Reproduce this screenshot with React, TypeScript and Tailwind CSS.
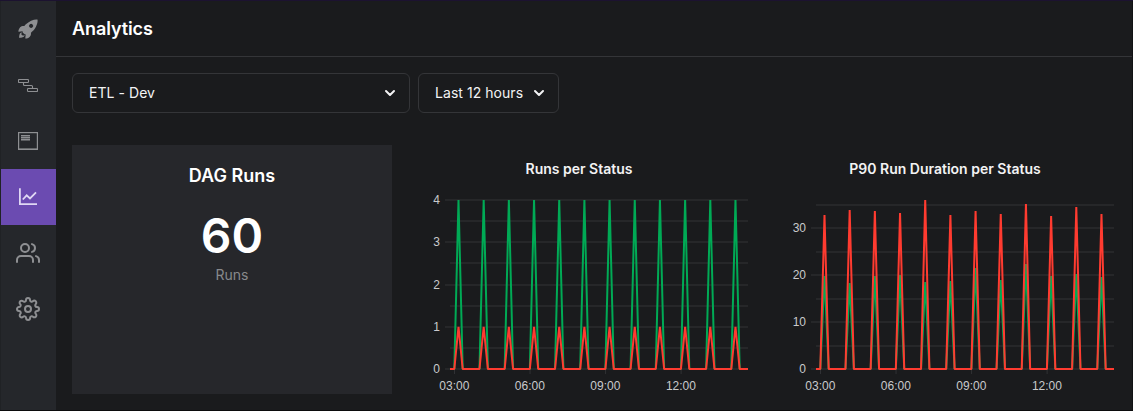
import { FiChevronDown, FiSettings, FiUsers } from 'react-icons/fi';
import { IoRocketSharp } from 'react-icons/io5';
import type { ReactNode } from 'react';

const PLOT_TOP = 200;
const BASE = 369;
const HOUR = 25.18;

function NavItem({ active, children }: { active?: boolean; children: ReactNode }) {
  return (
    <a className={`flex h-14 w-full items-center justify-center pr-px ${active ? 'bg-[#6b4bb1] text-[#e0d8f4]' : 'text-[#8e8f92]'}`}>
      {children}
    </a>
  );
}

function PipelineIcon() {
  return (
    <svg className="mt-px" width="20" height="14" viewBox="0 0 20 14" fill="none" stroke="currentColor" strokeWidth="1.1">
      <rect x="0.5" y="0.5" width="10" height="3" rx="0.8" />
      <rect x="9.5" y="9.5" width="10" height="3" rx="0.8" />
      <path d="M5.5 3.5v2q0 1 1 1h7q1 0 1 1v2" />
    </svg>
  );
}

function WindowIcon() {
  return (
    <svg width="20" height="18" viewBox="0 0 20 18" fill="none" stroke="currentColor">
      <rect x="0.6" y="0.6" width="18.8" height="16.8" strokeWidth="1.2" />
      <path d="M3 3.5h9M3 5.5h9M3 7.5h9" strokeWidth="1" />
      <path d="M3 4.5h9M3 6.5h9M3 8.5h9M1 16.5h18" strokeWidth="1" opacity="0.5" />
    </svg>
  );
}

function ChartIcon() {
  return (
    <svg width="18" height="18" viewBox="0 0 18 18" fill="none" stroke="currentColor" strokeWidth="1.8">
      <path d="M0.9 0.3v15.8H18" />
      <path d="M3.8 11.5 7.7 7.3 11 10.5 17 4.4" />
    </svg>
  );
}

type ChartProps = {
  title: string;
  green: number[];
  red: number[];
  labels: { text: string; y: number }[];
  minor: number[];
};

function linePath(peaks: number[]) {
  const start = 40;
  let d = `M${start - 4} ${BASE - PLOT_TOP}`;
  peaks.forEach((top, i) => {
    const x = start + 0.3 + i * HOUR;
    d += `L${x} ${BASE - PLOT_TOP}L${x + 4.2} ${top - PLOT_TOP}L${x + 8.4} ${BASE - PLOT_TOP}`;
  });
  return `${d}L334 ${BASE - PLOT_TOP}`;
}

function Chart({ title, green, red, labels, minor }: ChartProps) {
  return (
    <section className="h-[249px] w-[350px] shrink-0">
      <h3 className="pt-[14px] pr-5 text-center text-[14px] leading-5 font-semibold text-[#f3f3f4]">{title}</h3>
      <svg className="mt-[11px] block" width="350" height="204" viewBox="0 -10 350 204">
        <g stroke="#262729" strokeWidth="2">
          {minor.map((y) => <path key={y} d={`M36 ${y - PLOT_TOP}H334`} />)}
          {labels.map(({ y }) => <path key={y} d={`M31 ${y - PLOT_TOP}H334`} />)}
        </g>
        <g stroke="#303134" strokeWidth="1">
          {[0, 1, 2, 3].map((i) => <path key={i} d={`M${40.5 + i * 75.54} 169v5`} />)}
        </g>
        <g fill="none" strokeWidth="2" strokeLinejoin="bevel">
          <path d={linePath(green)} stroke="#00aa55" />
          <path d={linePath(red)} stroke="#ff3b30" />
        </g>
        <g fill="#c9cacc" fontSize="12" className="font-['Liberation_Sans',sans-serif]">
          {labels.map(({ text, y }) => <text key={text} x="26" y={y - PLOT_TOP + 4} textAnchor="end">{text}</text>)}
          {['03:00', '06:00', '09:00', '12:00'].map((t, i) => (
            <text key={t} x={40.3 + i * 75.54} y="190" textAnchor="middle">{t}</text>
          ))}
        </g>
      </svg>
    </section>
  );
}

function Select({ label, className }: { label: string; className: string }) {
  return (
    <button className={`flex h-10 items-center justify-between rounded-md border border-[#343538] pr-[11px] pl-4 text-[14px] leading-5 tracking-[0.05px] text-[#f3f3f4] ${className}`}>
      <span>{label}</span>
      <FiChevronDown size={16} strokeWidth={3} />
    </button>
  );
}

export default function App() {
  return (
    <div className="flex h-[411px] w-[1133px] overflow-hidden border-y border-t-[#1c1230] border-b-[#0b0b0c] bg-[#1a1b1d] font-['Inter',sans-serif] text-white">
      <nav className="flex w-14 shrink-0 flex-col border-l border-l-[#202225] bg-[#25272b]">
        <NavItem><IoRocketSharp size={22} /></NavItem>
        <NavItem><PipelineIcon /></NavItem>
        <NavItem><WindowIcon /></NavItem>
        <NavItem active><ChartIcon /></NavItem>
        <NavItem><FiUsers size={24} /></NavItem>
        <NavItem><FiSettings size={24} /></NavItem>
      </nav>
      <main className="min-w-0 flex-1 border-r border-[#111214]">
        <header className="flex h-14 items-center border-b border-[#343538] px-4">
          <h1 className="text-[18px] leading-6 font-semibold tracking-[-0.1px]">Analytics</h1>
        </header>
        <div className="flex gap-2 px-4 pt-4">
          <Select label="ETL - Dev" className="w-[338px]" />
          <Select label="Last 12 hours" className="w-[141px]" />
        </div>
        <div className="flex px-4 pt-8">
          <section className="flex h-[249px] w-[320px] shrink-0 flex-col items-center bg-[#26272b] pt-[19px]">
            <h2 className="text-[18px] leading-6 font-semibold">DAG Runs</h2>
            <p className="mt-[18px] text-[48px] leading-[60px] font-semibold">60</p>
            <p className="-mt-px text-[14px] leading-5 text-[#88898c]">Runs</p>
          </section>
          <div className="ml-[22px] flex gap-4">
            <Chart
              title="Runs per Status"
              green={Array(12).fill(200)}
              red={Array(12).fill(326.75)}
              labels={[{ text: '4', y: 200 }, { text: '3', y: 242 }, { text: '2', y: 285 }, { text: '1', y: 327 }, { text: '0', y: 369 }]}
              minor={[221, 263, 306, 348]}
            />
            <Chart
              title="P90 Run Duration per Status"
              green={[276, 283, 276, 275, 282, 281, 268, 280, 264, 276, 274, 277]}
              red={[215, 210, 211, 213, 200, 215, 211, 214, 204, 216, 207, 214]}
              labels={[{ text: '30', y: 228 }, { text: '20', y: 275 }, { text: '10', y: 322 }, { text: '0', y: 369 }]}
              minor={[205, 252, 299, 346]}
            />
          </div>
        </div>
      </main>
    </div>
  );
}
